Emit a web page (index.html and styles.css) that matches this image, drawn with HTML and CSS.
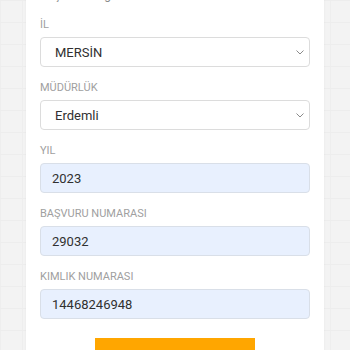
FILE: index.html
```html
<!DOCTYPE html>
<html lang="tr">
<head>
<meta charset="utf-8">
<link rel="stylesheet" href="styles.css">
</head>
<body>
<div class="page">
  <div class="card">
    <div class="title">Başvuru Sorgulama</div>
    <div class="field">
      <div class="label">İL</div>
      <div class="select"><span>MERSİN</span><svg class="chev" width="8" height="5" viewBox="0 0 8 5"><path d="M0.5 0.5 L4 4 L7.5 0.5" fill="none" stroke="#8a8a8a" stroke-width="1"/></svg></div>
    </div>
    <div class="field">
      <div class="label">MÜDÜRLÜK</div>
      <div class="select"><span>Erdemli</span><svg class="chev" width="8" height="5" viewBox="0 0 8 5"><path d="M0.5 0.5 L4 4 L7.5 0.5" fill="none" stroke="#8a8a8a" stroke-width="1"/></svg></div>
    </div>
    <div class="field">
      <div class="label">YIL</div>
      <div class="input">2023</div>
    </div>
    <div class="field">
      <div class="label">BAŞVURU NUMARASI</div>
      <div class="input">29032</div>
    </div>
    <div class="field">
      <div class="label">KIMLIK NUMARASI</div>
      <div class="input">14468246948</div>
    </div>
    <div class="actions">
      <div class="button"></div>
    </div>
  </div>
</div>
</body>
</html>
```
FILE: styles.css
```css
html, body {
  margin: 0;
  padding: 0;
}
body {
  font-family: Roboto, "Noto Sans", sans-serif;
  background-color: #f3f3f3;
  background-image:
    linear-gradient(#ededed 1px, transparent 1px),
    linear-gradient(90deg, #eeeeee 1px, transparent 1px);
  background-size: 22px 22px;
  height: 350px;
  overflow: hidden;
}
.page {
  display: flex;
  justify-content: center;
}
.card {
  width: 298px;
  box-sizing: border-box;
  margin-top: -26px;
  padding: 14px 14px 40px;
  background: #fff;
  box-shadow: 0 0 2px rgba(0,0,0,0.06);
}
.title {
  font-size: 12px;
  line-height: 14px;
  color: #8a8a8a;
  margin-bottom: 16px;
}
.field {
  margin-bottom: 14px;
}
.label {
  font-size: 11px;
  line-height: 13px;
  color: #a0a0a0;
  margin-bottom: 6px;
}
.select, .input {
  box-sizing: border-box;
  height: 30px;
  border-radius: 4px;
  display: flex;
  align-items: center;
  font-size: 13px;
  color: #303030;
}
.select {
  border: 1px solid #dcdcdc;
  background: #fff;
  padding: 0 5px 0 14px;
  justify-content: space-between;
}
.chev {
  display: block;
}
.input {
  border: 1px solid #d9dfe8;
  background: #e8f0fe;
  padding: 0 11px;
}
.actions {
  display: flex;
  justify-content: center;
  padding-top: 5px;
}
.button {
  width: 160px;
  height: 34px;
  background: #ffa600;
}
```
